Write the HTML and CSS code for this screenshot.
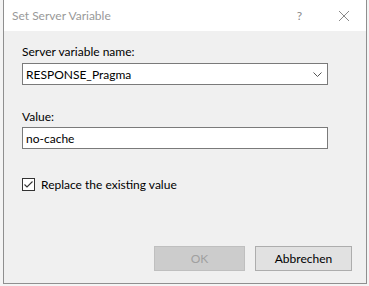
FILE: index.html
```html
<!DOCTYPE html>
<html lang="en">
<head>
  <meta charset="UTF-8" />
  <title>Set Server Variable</title>
  <link rel="stylesheet" href="styles.css">
</head>
<body>
  <div class="dialog">
    <div class="titlebar">
      <span class="title">Set Server Variable</span>
      <span class="help">?</span>
      <svg class="close" width="12" height="12" viewBox="0 0 12 12">
        <path d="M1 1 L11 11 M11 1 L1 11" stroke="#8a8a8a" stroke-width="1" fill="none" />
      </svg>
    </div>

    <div class="content">
      <label class="label">Server variable name:</label>
      <div class="field select">
        <span>RESPONSE_Pragma</span>
        <svg class="chevron" width="9" height="5" viewBox="0 0 9 5">
          <path d="M0.5 0.5 L4.5 4.5 L8.5 0.5" stroke="#555" stroke-width="1" fill="none" />
        </svg>
      </div>

      <label class="label label-value">Value:</label>
      <div class="field">
        <span>no-cache</span>
      </div>

      <div class="check-row">
        <svg class="checkbox" width="13" height="13" viewBox="0 0 13 13">
          <rect x="0.5" y="0.5" width="12" height="12" fill="#fff" stroke="#333" />
          <path d="M2.5 6.5 L5 9 L10.5 3.5" stroke="#333" stroke-width="1.1" fill="none" />
        </svg>
        <span>Replace the existing value</span>
      </div>
    </div>

    <div class="footer">
      <button class="btn btn-ok" disabled>OK</button>
      <button class="btn btn-cancel">Abbrechen</button>
    </div>
  </div>
</body>
</html>
```

FILE: styles.css
```css
html, body {
  margin: 0;
  padding: 0;
}

body {
  background: #f4f4f4;
  font-family: "Lato", "Liberation Sans", sans-serif;
  font-size: 12px;
  color: #000;
}

.dialog {
  width: 364px;
  height: 284px;
  margin-left: 3px;
  border: 1px solid #8f8f8f;
  border-top: none;
  box-sizing: border-box;
  background: #f0f0f0;
  display: flex;
  flex-direction: column;
}

.titlebar {
  height: 31px;
  background: #fff;
  display: flex;
  align-items: center;
  padding-left: 8px;
  flex-shrink: 0;
}

.title {
  color: #999;
  flex: 1;
}

.help {
  color: #8a8a8a;
  margin-right: 36px;
}

.close {
  margin-right: 16px;
}

.content {
  display: flex;
  flex-direction: column;
  padding: 13px 0 0 18px;
}

.label {
  height: 16px;
  line-height: 16px;
  margin-bottom: 3px;
}

.label-value {
  margin-top: 24px;
  margin-bottom: 2px;
}

.field {
  width: 306px;
  height: 22px;
  box-sizing: border-box;
  border: 1px solid #7a7a7a;
  background: #fff;
  display: flex;
  align-items: center;
  padding-left: 3px;
}

.select span {
  flex: 1;
}

.chevron {
  margin-right: 5px;
}

.check-row {
  display: flex;
  align-items: center;
  height: 17px;
  margin-top: 27px;
}

.checkbox {
  margin-right: 6px;
}

.footer {
  margin-top: auto;
  display: flex;
  justify-content: flex-end;
  gap: 10px;
  padding: 0 14px 12px 0;
}

.btn {
  height: 25px;
  font-family: inherit;
  font-size: 12px;
  padding: 0;
  box-sizing: border-box;
}

.btn-ok {
  width: 91px;
  background: #cccccc;
  border: 1px solid #bfbfbf;
  color: #a0a0a0;
}

.btn-cancel {
  width: 97px;
  background: #e1e1e1;
  border: 1px solid #adadad;
  color: #000;
}
```
